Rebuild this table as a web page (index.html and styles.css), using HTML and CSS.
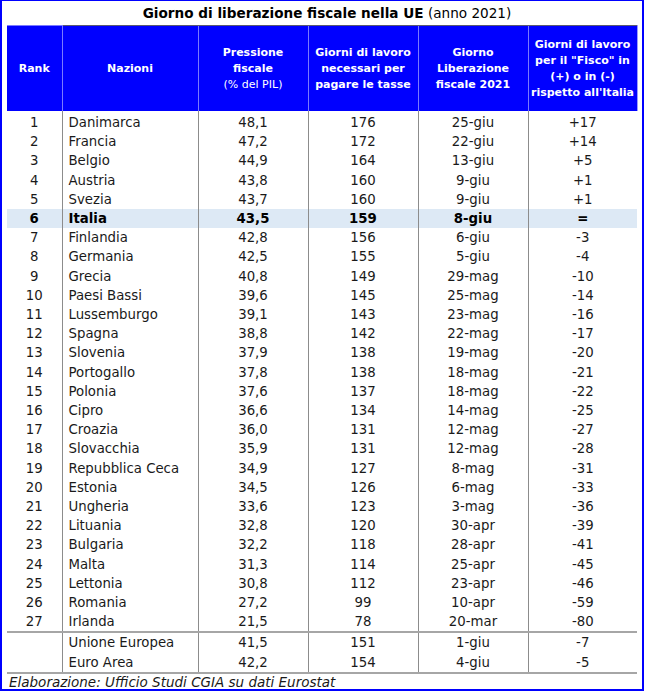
FILE: index.html
```html
<!DOCTYPE html>
<html lang="it">
<head>
<meta charset="utf-8">
<title>Giorno di liberazione fiscale nella UE</title>
<link rel="stylesheet" href="styles.css">
</head>
<body>
<div class="frame">
  <div class="title"><b>Giorno di liberazione fiscale nella UE</b> (anno 2021)</div>
  <table class="tbl">
    <colgroup>
      <col class="c-rank"><col class="c-naz"><col class="c-num"><col class="c-num"><col class="c-num"><col class="c-last">
    </colgroup>
    <thead>
      <tr>
        <th>Rank</th>
        <th>Nazioni</th>
        <th>Pressione<br>fiscale<br><span class="thin">(% del PIL)</span></th>
        <th>Giorni di lavoro<br>necessari per<br>pagare le tasse</th>
        <th>Giorno<br>Liberazione<br>fiscale 2021</th>
        <th>Giorni di lavoro<br>per il "Fisco" in<br>(+) o in (-)<br>rispetto all'Italia</th>
      </tr>
    </thead>
    <tbody>
      <tr class="first"><td>1</td><td class="name">Danimarca</td><td>48,1</td><td>176</td><td>25-giu</td><td>+17</td></tr>
      <tr><td>2</td><td class="name">Francia</td><td>47,2</td><td>172</td><td>22-giu</td><td>+14</td></tr>
      <tr><td>3</td><td class="name">Belgio</td><td>44,9</td><td>164</td><td>13-giu</td><td>+5</td></tr>
      <tr><td>4</td><td class="name">Austria</td><td>43,8</td><td>160</td><td>9-giu</td><td>+1</td></tr>
      <tr><td>5</td><td class="name">Svezia</td><td>43,7</td><td>160</td><td>9-giu</td><td>+1</td></tr>
      <tr class="hl"><td>6</td><td class="name">Italia</td><td>43,5</td><td>159</td><td>8-giu</td><td>=</td></tr>
      <tr><td>7</td><td class="name">Finlandia</td><td>42,8</td><td>156</td><td>6-giu</td><td>-3</td></tr>
      <tr><td>8</td><td class="name">Germania</td><td>42,5</td><td>155</td><td>5-giu</td><td>-4</td></tr>
      <tr><td>9</td><td class="name">Grecia</td><td>40,8</td><td>149</td><td>29-mag</td><td>-10</td></tr>
      <tr><td>10</td><td class="name">Paesi Bassi</td><td>39,6</td><td>145</td><td>25-mag</td><td>-14</td></tr>
      <tr><td>11</td><td class="name">Lussemburgo</td><td>39,1</td><td>143</td><td>23-mag</td><td>-16</td></tr>
      <tr><td>12</td><td class="name">Spagna</td><td>38,8</td><td>142</td><td>22-mag</td><td>-17</td></tr>
      <tr><td>13</td><td class="name">Slovenia</td><td>37,9</td><td>138</td><td>19-mag</td><td>-20</td></tr>
      <tr><td>14</td><td class="name">Portogallo</td><td>37,8</td><td>138</td><td>18-mag</td><td>-21</td></tr>
      <tr><td>15</td><td class="name">Polonia</td><td>37,6</td><td>137</td><td>18-mag</td><td>-22</td></tr>
      <tr><td>16</td><td class="name">Cipro</td><td>36,6</td><td>134</td><td>14-mag</td><td>-25</td></tr>
      <tr><td>17</td><td class="name">Croazia</td><td>36,0</td><td>131</td><td>12-mag</td><td>-27</td></tr>
      <tr><td>18</td><td class="name">Slovacchia</td><td>35,9</td><td>131</td><td>12-mag</td><td>-28</td></tr>
      <tr><td>19</td><td class="name">Repubblica Ceca</td><td>34,9</td><td>127</td><td>8-mag</td><td>-31</td></tr>
      <tr><td>20</td><td class="name">Estonia</td><td>34,5</td><td>126</td><td>6-mag</td><td>-33</td></tr>
      <tr><td>21</td><td class="name">Ungheria</td><td>33,6</td><td>123</td><td>3-mag</td><td>-36</td></tr>
      <tr><td>22</td><td class="name">Lituania</td><td>32,8</td><td>120</td><td>30-apr</td><td>-39</td></tr>
      <tr><td>23</td><td class="name">Bulgaria</td><td>32,2</td><td>118</td><td>28-apr</td><td>-41</td></tr>
      <tr><td>24</td><td class="name">Malta</td><td>31,3</td><td>114</td><td>25-apr</td><td>-45</td></tr>
      <tr><td>25</td><td class="name">Lettonia</td><td>30,8</td><td>112</td><td>23-apr</td><td>-46</td></tr>
      <tr><td>26</td><td class="name">Romania</td><td>27,2</td><td>99</td><td>10-apr</td><td>-59</td></tr>
      <tr class="last"><td>27</td><td class="name">Irlanda</td><td>21,5</td><td>78</td><td>20-mar</td><td>-80</td></tr>
      <tr class="agg top"><td></td><td class="name">Unione Europea</td><td>41,5</td><td>151</td><td>1-giu</td><td>-7</td></tr>
      <tr class="agg bottom"><td></td><td class="name">Euro Area</td><td>42,2</td><td>154</td><td>4-giu</td><td>-5</td></tr>
    </tbody>
  </table>
  <div class="source">Elaborazione: Ufficio Studi CGIA su dati Eurostat</div>
</div>
</body>
</html>
```
FILE: styles.css
```css
html, body {
  margin: 0;
  padding: 0;
  background: #ffffff;
}

.frame {
  box-sizing: border-box;
  width: 644px;
  height: 691px;
  border: 2px solid #0000ff;
  border-top-width: 1px;
  padding: 0 5px 0 5px;
  font-family: "DejaVu Sans", "Liberation Sans", sans-serif;
  color: #1a1a1a;
}

.title {
  height: 24px;
  line-height: 24px;
  padding-left: 10px;
  text-align: center;
  font-size: 13.6px;
  color: #000;
}

.tbl {
  border-collapse: collapse;
  table-layout: fixed;
  width: 630px;
}

.c-rank { width: 55px; }
.c-naz { width: 136px; }
.c-num { width: 110px; }
.c-last { width: 109px; }

.tbl th {
  height: 85px;
  padding: 0;
  background: #0000ff;
  color: #ffffff;
  font-size: 11px;
  font-weight: bold;
  line-height: 16px;
  text-align: center;
  vertical-align: middle;
  white-space: nowrap;
  border-left: 1px solid #7a7aff;
  border-top: 1px solid #5a5a70;
}

.tbl th:first-child {
  border-left: none;
  border-top-color: #7a7aff;
}

.tbl th:last-child {
  border-right: 1px solid #9a9aff;
}

.tbl th .thin {
  font-weight: normal;
}

.tbl td {
  height: 19.2px;
  padding: 0;
  font-size: 13.3px;
  line-height: 19.2px;
  text-align: center;
  white-space: nowrap;
  border-left: 1px solid #8c8c8c;
}

.tbl td:first-child {
  border-left: none;
}

.tbl td.name {
  text-align: left;
  padding-left: 6px;
}

.tbl tr.first td {
  padding-top: 2px;
}

.tbl tr.hl td {
  background: #dde9f5;
  font-weight: bold;
  color: #000;
}

.tbl tr.agg.top td {
  border-top: 2px solid #a6a6a6;
}

.tbl tr.agg.bottom td {
  border-bottom: 2px solid #a6a6a6;
}

.source {
  font-style: italic;
  font-size: 13.5px;
  line-height: 17px;
  padding-left: 2px;
}
```
